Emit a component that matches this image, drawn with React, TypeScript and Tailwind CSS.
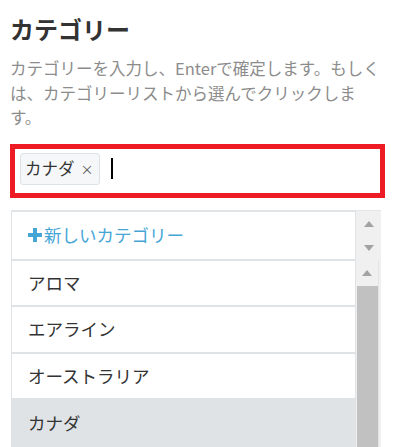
import React from "react";

const rowClass = "flex items-center pl-[16px] border border-[#dfe3e6] text-[17.5px]";

function Arrow({ dir }: { dir: "up" | "down" }) {
  return dir === "up" ? (
    <div className="w-0 h-0 border-x-[5px] border-x-transparent border-b-[6px] border-b-[#a3a3a3]" />
  ) : (
    <div className="w-0 h-0 border-x-[5px] border-x-transparent border-t-[6px] border-t-[#a3a3a3]" />
  );
}

export default function App() {
  const categories = ["アロマ", "エアライン", "オーストラリア"];

  return (
    <div
      className="w-[393px] h-[447px] overflow-hidden bg-white pl-[10px] pr-[8px] pt-[13px]"
      style={{ fontFamily: '"Noto Sans CJK JP", "Noto Sans", sans-serif' }}
    >
      <h2 className="text-[24px] leading-[32px] font-bold text-[#333]">カテゴリー</h2>
      <p className="mt-[11px] text-[16.5px] leading-[24.5px] text-[#8c8c8c]">
        カテゴリーを入力し、Enterで確定します。もしくは、カテゴリーリストから選んでクリックします。
      </p>

      <div className="mt-[14px] h-[54px] border-[5px] border-[#ed1c24] flex items-start pt-[4px] pl-[5px] gap-[11px]">
        <div className="h-[32px] flex items-center gap-[6px] pl-[4px] pr-[5px] bg-[#f5f7f9] border border-[#dde2e6] rounded-[3px]">
          <span className="text-[16.5px] text-[#333]">カナダ</span>
          <span className="text-[13px] text-[#555] leading-none">×</span>
        </div>
        <span className="mt-[5px] w-[2px] h-[21px] bg-black" />
      </div>

      <div className="mt-[12px] ml-px w-[370px] h-[260px] border-t border-[#e3e6e8] flex">
        <div className="flex-1 flex flex-col">
          <div className={rowClass + " h-[49px] text-[#45a6d6]"}>
            <svg width="14" height="14" viewBox="0 0 14 14" className="shrink-0">
              <rect x="5" y="0" width="4" height="14" fill="#45a6d6" />
              <rect x="0" y="5" width="14" height="4" fill="#45a6d6" />
            </svg>
            <span className="ml-[2px]">新しいカテゴリー</span>
          </div>
          {categories.map((c) => (
            <div key={c} className={rowClass + " h-[46.5px] text-[#333]"}>
              {c}
            </div>
          ))}
          <div className={rowClass + " h-[48px] bg-[#dfe3e6] text-[#333]"}>カナダ</div>
        </div>

        <div className="w-[25px] bg-[#f0f0f0] flex flex-col">
          <div className="h-[50px] flex flex-col items-center pt-[10px] gap-[18px]">
            <Arrow dir="up" />
            <Arrow dir="down" />
          </div>
          <div className="flex-1 w-[23px] border-r border-[#e4e4e4] flex flex-col items-center">
            <div className="mt-[9px]">
              <Arrow dir="up" />
            </div>
            <div className="mt-[10px] w-[21px] flex-1 bg-[#c1c1c1]" />
          </div>
        </div>
      </div>
    </div>
  );
}
